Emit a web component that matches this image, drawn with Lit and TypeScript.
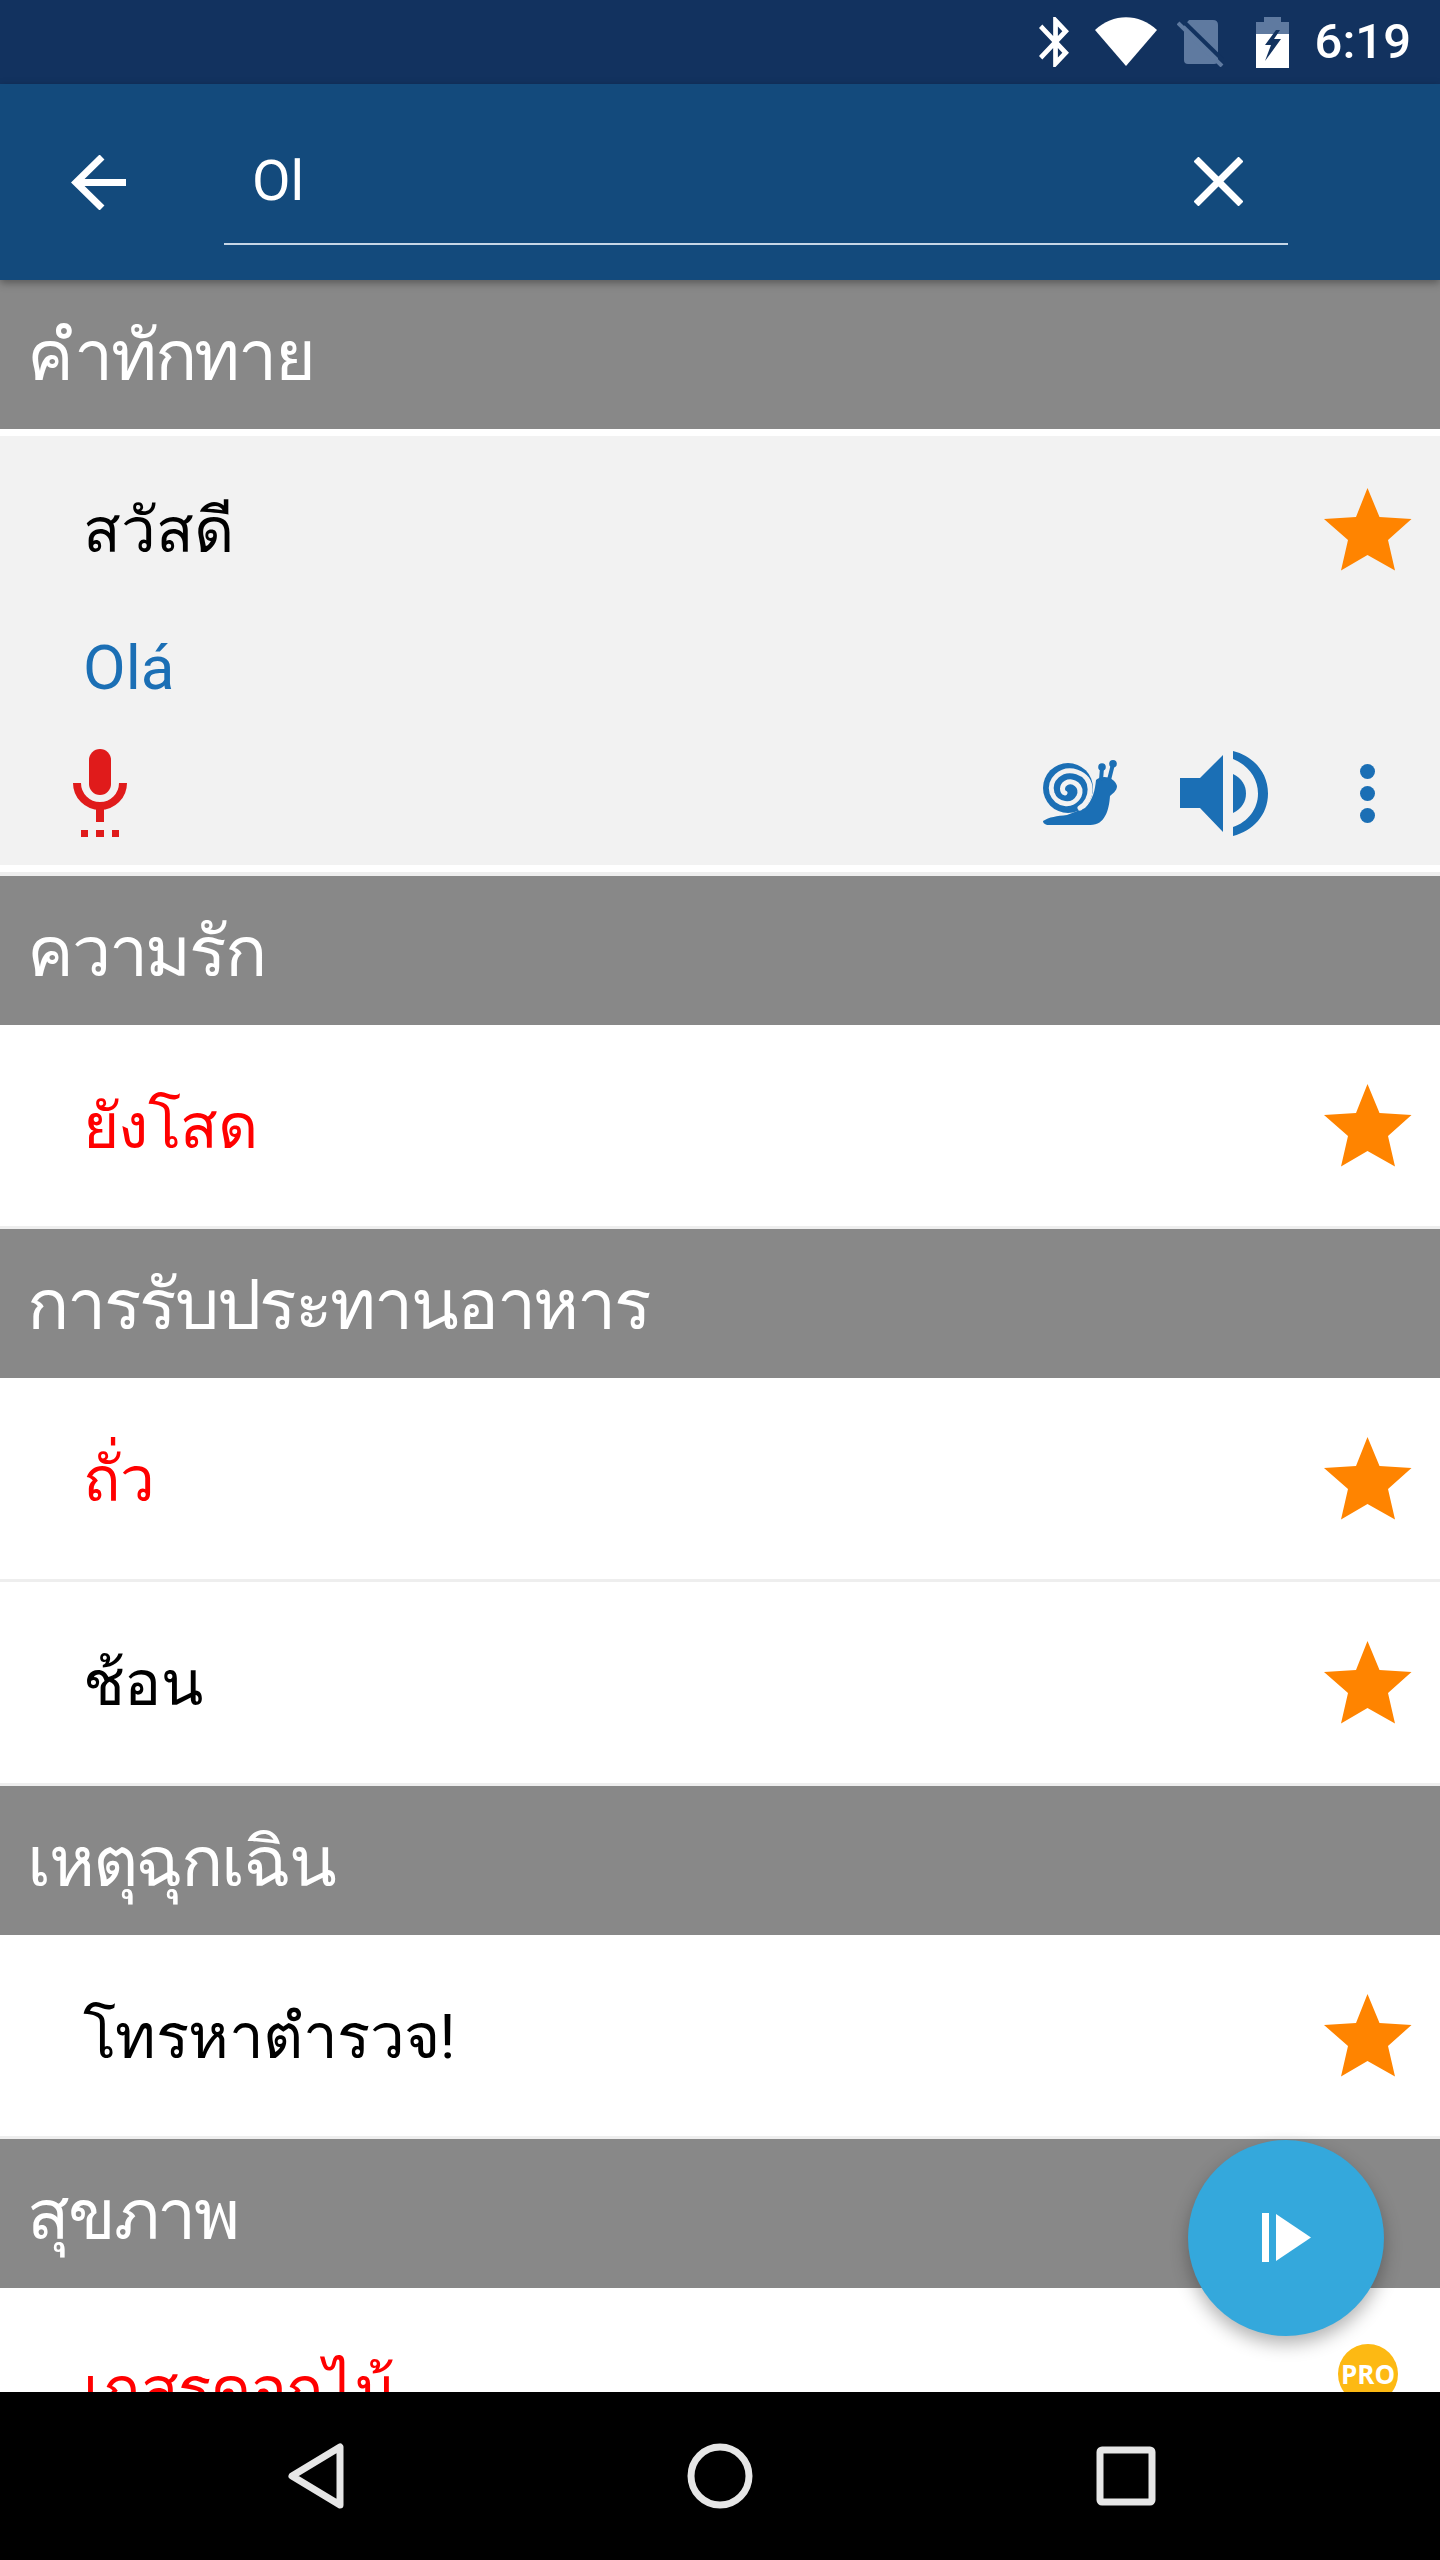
import { LitElement, html, css, svg } from "lit";
import { customElement } from "lit/decorators.js";

const STAR = "43.5,0 55.5,29 87.5,31 64,52 71,82.5 43.5,67 17,82.5 24,52 0,31 32,29";

type Item = { text: string; red?: boolean; pro?: boolean };
const SECTIONS: { title: string; items: Item[] }[] = [
  { title: "ความรัก", items: [{ text: "ยังโสด", red: true }] },
  { title: "การรับประทานอาหาร", items: [{ text: "ถั่ว", red: true }, { text: "ช้อน" }] },
  { title: "เหตุฉุกเฉิน", items: [{ text: "โทรหาตำรวจ!" }] },
  { title: "สุขภาพ", items: [{ text: "เกสรดอกไม้", red: true, pro: true }] },
];

@customElement("app-root")
export class AppRoot extends LitElement {
  static styles = css`
    :host {
      display: block;
      font-family: Roboto, "Noto Sans", "DejaVu Sans", sans-serif;
    }
    svg { display: block; flex: none; }
    .screen {
      position: relative;
      width: 1440px;
      height: 2560px;
      display: flex;
      flex-direction: column;
      overflow: hidden;
      background: #fff;
    }
    .status {
      height: 84px;
      flex: none;
      background: #12325f;
      display: flex;
      align-items: center;
      justify-content: flex-end;
      padding-right: 29px;
      box-sizing: border-box;
    }
    .status .bt { margin-right: 26px; }
    .status .wifi { margin-right: 20px; margin-top: -2px; }
    .status .sim { margin-right: 32px; margin-top: 2px; }
    .status .bat { margin-right: 26px; }
    .time { color: #fff; font-size: 49px; font-weight: 500; line-height: 84px; }
    .toolbar {
      position: relative;
      z-index: 2;
      height: 196px;
      flex: none;
      background: #134a7c;
      box-shadow: 0 3px 8px rgba(0, 0, 0, 0.35);
      display: flex;
      padding-left: 71px;
      box-sizing: border-box;
    }
    .back { margin: 71px 98px 0 0; }
    .field {
      width: 1064px;
      height: 161px;
      border-bottom: 2px solid #c6d6e6;
      display: flex;
      align-items: center;
      justify-content: space-between;
      padding: 0 45px 0 28px;
      box-sizing: border-box;
    }
    .field span { color: #fff; font-size: 56px; line-height: 60px; margin-top: 34px; }
    .field svg { margin-top: 35px; }
    .list { flex: 1; min-height: 0; overflow: hidden; }
    .head {
      height: 149px;
      background: #888;
      color: #fff;
      font-size: 70px;
      letter-spacing: -2.2px;
      line-height: 153px;
      padding-left: 27px;
    }
    .row {
      position: relative;
      height: 201px;
      margin-bottom: 3px;
      box-shadow: 0 3px 0 #eee;
      display: flex;
      align-items: center;
      justify-content: space-between;
      padding: 0 28px 0 83px;
      font-size: 62px;
      letter-spacing: -0.6px;
      color: #000;
    }
    .row.red { color: #f00; }
    .badge {
      width: 60px;
      height: 60px;
      border-radius: 50%;
      background: #fdb913;
      color: #fff;
      font: 700 26px/60px "Open Sans", sans-serif;
      letter-spacing: 0;
      text-align: center;
      margin-right: 14px;
      align-self: flex-start;
      margin-top: 56px;
    }
    .open {
      height: 429px;
      margin: 7px 0 11px;
      background: #f2f2f2;
      display: flex;
      flex-direction: column;
      box-sizing: border-box;
      padding: 52px 28px 0 0;
      box-shadow: 0 7px 0 #fff, 0 11px 0 #eee;
    }
    .open .top { display: flex; justify-content: space-between; align-items: center; height: 83px; padding-left: 83px; font-size: 62px; color: #000; }
    .open .tr { margin: 62px 0 0 83px; height: 70px; line-height: 70px; font-size: 62px; color: #1b6fb5; }
    .tools { display: flex; align-items: center; margin-top: 46px; padding-left: 73px; }
    .tools .snail { margin-left: auto; }
    .tools .speaker { margin-left: 63px; }
    .tools .dots { margin: 0 37px 0 92px; }
    .fab {
      position: absolute;
      left: 1188px;
      top: 2140px;
      width: 196px;
      height: 196px;
      border-radius: 50%;
      background: #34a8dc;
      box-shadow: 0 8px 18px rgba(0, 0, 0, 0.3);
      display: flex;
      align-items: center;
      justify-content: center;
    }
    .fab svg { margin-left: 2px; }
    .nav {
      position: relative;
      z-index: 3;
      height: 168px;
      flex: none;
      background: #000;
    }
    .nav svg { width: 1440px; height: 168px; }
  `;

  private star() {
    return html`<svg width="88" height="83" viewBox="0 0 88 83"><polygon points=${STAR} fill="#ff8400"/></svg>`;
  }

  private statusIcons() {
    return html`
      <svg class="bt" width="30" height="50" viewBox="5 2 12.71 20" preserveAspectRatio="none"><path fill="#fff" d="M17.71 7.71L12 2h-1v7.59L6.41 5 5 6.41 10.59 12 5 17.59 6.41 19 11 14.41V22h1l5.71-5.71-4.3-4.29 4.3-4.29zM13 5.83l1.88 1.88L13 9.59V5.83zm1.88 10.46L13 18.17v-3.76l1.88 1.88z"/></svg>
      <svg class="wifi" width="62" height="49" viewBox="0 0 62 49"><path fill="#fff" d="M0 13C18-4 44-4 62 13L31 49Z"/></svg>
      <svg class="sim" width="47" height="47" viewBox="0 0 47 47">
        <path fill="#5f7aa0" d="M12 0H36Q41 0 41 5V40Q41 44 37 44H11Q7 44 7 40V6Z"/>
        <path stroke="#12325f" stroke-width="4" d="M4 -1L48 42"/>
        <path stroke="#5f7aa0" stroke-width="4" d="M1 3L45 46"/>
      </svg>
      <svg class="bat" width="33" height="51" viewBox="0 0 33 51">
        <path fill="#5f7aa0" d="M8 0H25V5H33V17H0V5H8Z"/>
        <rect y="17" width="33" height="34" fill="#fff"/>
        <polygon fill="#12325f" points="20,13 9,28 15,28 9,44 25,22 18,22 24,13"/>
      </svg>
    `;
  }

  private snail() {
    return html`<svg class="snail" width="74" height="66" viewBox="0 0 74 66" fill="#1b6fb5">
      <circle cx="25" cy="28" r="25"/>
      <path d="M0 61C6 57 14 56 24 55L42 48C50 40 52 30 53 20C59 14 72 17 74 26C74 31 69 34 67 36C66 50 62 66 46 65L6 65C2 65 0 63 0 61Z"/>
      <path d="M58 20L59 8M66 20L70 4" stroke="#1b6fb5" stroke-width="4" fill="none"/>
      <circle cx="59" cy="7" r="3.8"/><circle cx="70" cy="3.8" r="3.8"/>
      <path fill="none" stroke="#f2f2f2" stroke-width="5" stroke-linecap="round" d="M37 48C50 40 52 18 34 12C18 7 5 20 9 33C13 45 30 48 36 36C40 26 30 19 23 23C18 26 19 32 22 33"/>
    </svg>`;
  }

  private navIcons() {
    return svg`
      <path fill="none" stroke="#e6e6e6" stroke-width="7" stroke-linejoin="round" d="M340 55V113L292 84Z"/>
      <circle cx="720" cy="84" r="29" fill="none" stroke="#e6e6e6" stroke-width="7"/>
      <rect x="1100" y="58" width="52" height="52" rx="2" fill="none" stroke="#e6e6e6" stroke-width="7"/>
    `;
  }

  render() {
    return html`
      <div class="screen">
        <div class="status">${this.statusIcons()}<span class="time">6:19</span></div>
        <div class="toolbar">
          <svg class="back" width="55" height="55" viewBox="0 0 55 55"><path fill="none" stroke="#fff" stroke-width="7" d="M31 2L5 27.5L31 53M5 27.5H55"/></svg>
          <div class="field">
            <span>Ol</span>
            <svg width="49" height="49" viewBox="0 0 49 49"><path stroke="#fff" stroke-width="7" d="M2 2L47 47M47 2L2 47"/></svg>
          </div>
        </div>
        <div class="list">
          <div class="head">คำทักทาย</div>
          <div class="open">
            <div class="top"><span>สวัสดี</span>${this.star()}</div>
            <div class="tr">Olá</div>
            <div class="tools">
              <svg width="54" height="88" viewBox="0 0 54 88" fill="#e01b1b">
                <rect x="16" width="22" height="46" rx="11"/>
                <path d="M4 34A23 23 0 0 0 50 34" fill="none" stroke="#e01b1b" stroke-width="8"/>
                <rect x="23" y="55" width="8" height="18"/>
                <rect x="8" y="81" width="7" height="7"/><rect x="23" y="81" width="8" height="7"/><rect x="39" y="81" width="7" height="7"/>
              </svg>
              ${this.snail()}
              <svg class="speaker" width="88" height="87" viewBox="0 0 88 87" fill="#1b6fb5">
                <polygon points="0,28 20,28 43,5 43,82 20,58 0,58"/>
                <path d="M53 24C62 28 66 36 66 43.5S62 59 53 63Z"/>
                <path d="M53 1C73 6 88 22 88 43.5S73 81 53 86V77C68 72 78 59 78 43.5S68 15 53 9Z"/>
              </svg>
              <svg class="dots" width="15" height="59" viewBox="0 0 15 59" fill="#1b6fb5">
                <circle cx="7.5" cy="7.5" r="7.5"/><circle cx="7.5" cy="29.5" r="7.5"/><circle cx="7.5" cy="51.5" r="7.5"/>
              </svg>
            </div>
          </div>
          ${SECTIONS.map(
            (s) => html`
              <div class="head">${s.title}</div>
              ${s.items.map(
                (it) => html`
                  <div class="row ${it.red ? "red" : ""}">
                    <span>${it.text}</span>
                    ${it.pro ? html`<div class="badge">PRO</div>` : this.star()}
                  </div>
                `
              )}
            `
          )}
        </div>
        <div class="fab">
          <svg width="50" height="50" viewBox="0 0 50 50" fill="#fff"><rect x="0" width="7" height="49"/><polygon points="14,1 49,24.5 14,48"/></svg>
        </div>
        <div class="nav"><svg viewBox="0 0 1440 168">${this.navIcons()}</svg></div>
      </div>
    `;
  }
}
